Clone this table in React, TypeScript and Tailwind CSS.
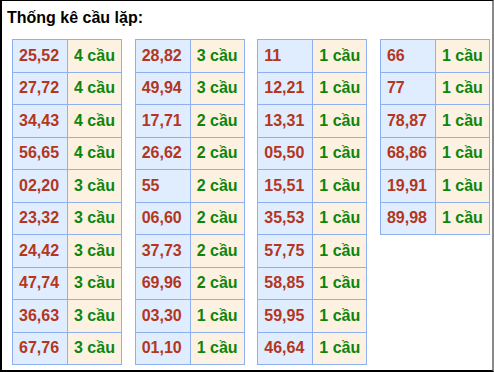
import React from 'react';

type Row = [string, string];

const TABLES: Row[][] = [
  [
    ['25,52', '4 cầu'],
    ['27,72', '4 cầu'],
    ['34,43', '4 cầu'],
    ['56,65', '4 cầu'],
    ['02,20', '3 cầu'],
    ['23,32', '3 cầu'],
    ['24,42', '3 cầu'],
    ['47,74', '3 cầu'],
    ['36,63', '3 cầu'],
    ['67,76', '3 cầu'],
  ],
  [
    ['28,82', '3 cầu'],
    ['49,94', '3 cầu'],
    ['17,71', '2 cầu'],
    ['26,62', '2 cầu'],
    ['55', '2 cầu'],
    ['06,60', '2 cầu'],
    ['37,73', '2 cầu'],
    ['69,96', '2 cầu'],
    ['03,30', '1 cầu'],
    ['01,10', '1 cầu'],
  ],
  [
    ['11', '1 cầu'],
    ['12,21', '1 cầu'],
    ['13,31', '1 cầu'],
    ['05,50', '1 cầu'],
    ['15,51', '1 cầu'],
    ['35,53', '1 cầu'],
    ['57,75', '1 cầu'],
    ['58,85', '1 cầu'],
    ['59,95', '1 cầu'],
    ['46,64', '1 cầu'],
  ],
  [
    ['66', '1 cầu'],
    ['77', '1 cầu'],
    ['78,87', '1 cầu'],
    ['68,86', '1 cầu'],
    ['19,91', '1 cầu'],
    ['89,98', '1 cầu'],
  ],
];

const PairTable: React.FC<{ rows: Row[] }> = ({ rows }) => (
  <table className="w-[110px] border-collapse">
    <tbody>
      {rows.map(([pair, count]) => (
        <tr key={pair} className="h-[32.5px]">
          <td className="w-[55px] border border-[#8fb0f0] bg-[#dfedff] pl-[6px] text-[#b3361d]">{pair}</td>
          <td className="border border-[#8fb0f0] bg-[#fdf2e1] pl-[6px] text-[#0d850d]">{count}</td>
        </tr>
      ))}
    </tbody>
  </table>
);

export default function App() {
  return (
    <div
      className="w-[494px] h-[372px] border-t border-l-2 border-b-2 border-r-2 border-t-black border-l-black border-b-black border-r-[#8a8a8a] bg-white"
      style={{ fontFamily: '"Liberation Sans", Arial, sans-serif' }}
    >
      <h2 className="pl-[5px] pt-[7px] text-[16px] font-bold leading-[19px] text-black">Thống kê cầu lặp:</h2>
      <div className="mt-[12px] flex items-start justify-between pl-[10px] pr-[2px] text-[16px] font-bold">
        {TABLES.map((rows, i) => (
          <PairTable key={i} rows={rows} />
        ))}
      </div>
    </div>
  );
}
